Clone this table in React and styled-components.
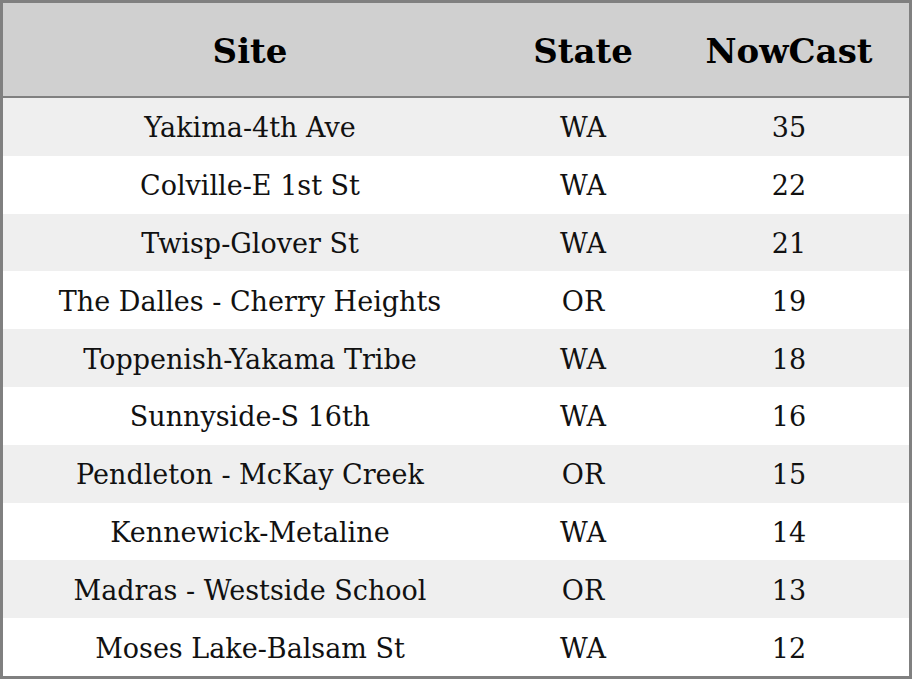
import React from "react";
import styled, { createGlobalStyle } from "styled-components";

const rows = [
  ["Yakima-4th Ave", "WA", 35],
  ["Colville-E 1st St", "WA", 22],
  ["Twisp-Glover St", "WA", 21],
  ["The Dalles - Cherry Heights", "OR", 19],
  ["Toppenish-Yakama Tribe", "WA", 18],
  ["Sunnyside-S 16th", "WA", 16],
  ["Pendleton - McKay Creek", "OR", 15],
  ["Kennewick-Metaline", "WA", 14],
  ["Madras - Westside School", "OR", 13],
  ["Moses Lake-Balsam St", "WA", 12],
];

export default function App() {
  return (
    <>
      <GlobalStyle />
      <Table>
        <HeaderRow>
          <HeadCell>Site</HeadCell>
          <HeadCell>State</HeadCell>
          <HeadCell>NowCast</HeadCell>
        </HeaderRow>
        {rows.map(([site, state, value], i) => (
          <Row key={site} $shaded={i % 2 === 0}>
            <Cell>{site}</Cell>
            <Cell>{state}</Cell>
            <Cell>{value}</Cell>
          </Row>
        ))}
      </Table>
    </>
  );
}

const GlobalStyle = createGlobalStyle`
  body {
    margin: 0;
    font-family: "DejaVu Serif", serif;
    color: #111;
    background: #fff;
  }
`;

const Table = styled.div`
  width: 912px;
  height: 679px;
  box-sizing: border-box;
  border: 3px solid #808080;
  display: grid;
  grid-template-rows: 95px repeat(10, 1fr);
  overflow: hidden;
`;

const HeaderRow = styled.div`
  display: grid;
  grid-template-columns: 494px 172px 1fr;
  background: #d0d0d0;
  border-bottom: 2px solid #808080;
`;

const HeadCell = styled.div`
  display: flex;
  align-items: center;
  justify-content: center;
  padding-top: 2px;
  font-size: 34px;
  font-weight: bold;
  color: #000;
`;

const Row = styled.div`
  display: grid;
  grid-template-columns: 494px 172px 1fr;
  background: ${(p) => (p.$shaded ? "#efefef" : "#ffffff")};
`;

const Cell = styled.div`
  display: flex;
  align-items: center;
  justify-content: center;
  padding-top: 2px;
  font-size: 27px;
  color: #111;
`;
